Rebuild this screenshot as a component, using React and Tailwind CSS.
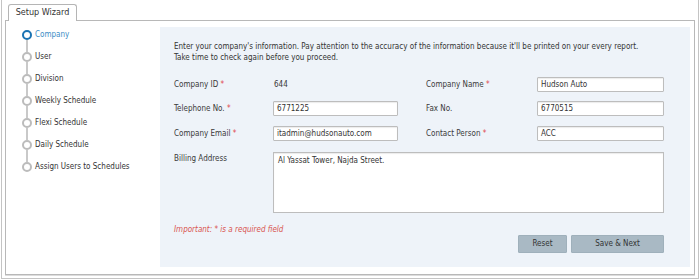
import React from "react";

const steps = [
  "Company",
  "User",
  "Division",
  "Weekly Schedule",
  "Flexi Schedule",
  "Daily Schedule",
  "Assign Users to Schedules",
];

function Star() {
  return <span className="text-[#e0464c]"> *</span>;
}

function Input({ value, w }) {
  return (
    <div
      className={`${w} h-[15px] bg-white border border-[#bdbdbd] shadow-[inset_0_1px_1px_rgba(0,0,0,0.08)] rounded-[1px] flex items-center px-[3px] text-[#333]`}
    >
      {value}
    </div>
  );
}

export default function App() {
  return (
    <div
      className="w-[700px] h-[280px] bg-white text-[8px] text-[#3a3a3a] overflow-hidden"
      style={{ fontFamily: '"DejaVu Sans Condensed", "DejaVu Sans", sans-serif' }}
    >
      <div className="ml-[1px] w-[698px] h-[279px] border-x border-b border-[#c4c4c4] pl-[3px] pt-[4px]">
        {/* tab */}
        <div className="pl-[3px] flex">
          <div className="relative z-10 h-[17px] -mb-px w-[69px] bg-white border border-b-0 border-[#b5b5b5] rounded-t-[3px] flex items-center justify-center text-[9px] text-[#333]">
            Setup Wizard
          </div>
        </div>
        {/* panel */}
        <div className="w-[690px] h-[255px] border border-[#b8b8b8] shadow-[0_1px_0_#dcdcdc] flex pt-[6px] pr-[4px] pb-[7px]">
          {/* sidebar */}
          <div className="w-[154px] pl-[16px] -mt-[3px] flex flex-col">
            {steps.map((s, i) => (
              <div key={s} className="flex items-stretch h-[22px]">
                <div className="w-[10px] flex flex-col items-center">
                  <div className={`w-[2px] flex-1 ${i === 0 ? "bg-transparent" : "bg-[#c9c9c9]"}`} />
                  <div
                    className={`w-[10px] h-[10px] rounded-full bg-white shrink-0 ${
                      i === 0 ? "border-[2.5px] border-[#1a73b3]" : "border-2 border-[#bcbcbc]"
                    }`}
                  />
                  <div className={`w-[2px] flex-1 ${i === steps.length - 1 ? "bg-transparent" : "bg-[#c9c9c9]"}`} />
                </div>
                <div
                  className={`ml-[3px] flex items-center ${
                    i === 0 ? "text-[#3b8dc6]" : "text-[#333]"
                  }`}
                >
                  {s}
                </div>
              </div>
            ))}
          </div>
          {/* content */}
          <div className="flex-1 bg-[#eef3f9] pl-[14px] pr-[26px] pt-[14px] flex flex-col">
            <div className="leading-[11px] text-[#333]">
              Enter your company's information. Pay attention to the accuracy of the information because it'll be printed on your every report.
              <br />
              Take time to check again before you proceed.
            </div>
            <div className="mt-[14px] flex items-center h-[15px]">
              <div className="w-[99px]">Company ID<Star /></div>
              <div className="w-[125px] pl-[1px]">644</div>
              <div className="w-[28px]" />
              <div className="w-[111px]">Company Name<Star /></div>
              <Input value="Hudson Auto" w="w-[127px]" />
            </div>
            <div className="mt-[9px] flex items-center h-[15px]">
              <div className="w-[99px]">Telephone No.<Star /></div>
              <Input value="6771225" w="w-[125px]" />
              <div className="w-[28px]" />
              <div className="w-[111px]">Fax No.</div>
              <Input value="6770515" w="w-[127px]" />
            </div>
            <div className="mt-[10px] flex items-center h-[15px]">
              <div className="w-[99px]">Company Email<Star /></div>
              <Input value="itadmin@hudsonauto.com" w="w-[125px]" />
              <div className="w-[28px]" />
              <div className="w-[111px]">Contact Person<Star /></div>
              <Input value="ACC" w="w-[127px]" />
            </div>
            <div className="mt-[11px] flex items-start">
              <div className="w-[99px] pt-[1px]">Billing Address</div>
              <div className="w-[391px] h-[61px] bg-white border border-[#bdbdbd] shadow-[inset_0_1px_1px_rgba(0,0,0,0.08)] px-[4px] pt-[2px] text-[#333]">
                Al Yassat Tower, Najda Street.
              </div>
            </div>
            <div className="mt-[12px] leading-[10px] italic text-[#d9534f]">
              Important: * is a required field
            </div>
            <div className="flex justify-end gap-[4px]">
              <div className="w-[49px] h-[18px] bg-[#a9b9c4] border border-[#9fb0bb] rounded-[1px] flex items-center justify-center text-[#333]">
                Reset
              </div>
              <div className="w-[93px] h-[18px] bg-[#a9b9c4] border border-[#9fb0bb] rounded-[1px] flex items-center justify-center text-[#333]">
                Save &amp; Next
              </div>
            </div>
          </div>
        </div>
      </div>
    </div>
  );
}
